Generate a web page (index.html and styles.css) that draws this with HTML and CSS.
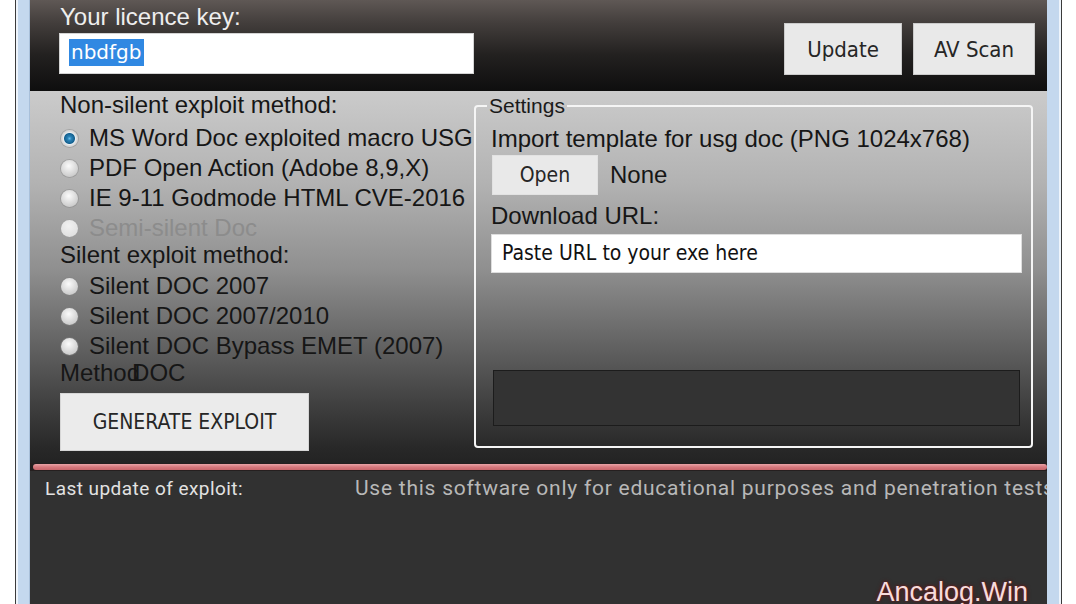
FILE: index.html
```html
<!DOCTYPE html>
<html lang="en">
<head>
<meta charset="utf-8">
<title>Exploit Builder</title>
<link rel="stylesheet" href="styles.css">
</head>
<body>
<div class="window">
  <div class="app">
    <header class="topbar">
      <div class="key">
        <div class="key-label">Your licence key:</div>
        <div class="key-input"><span class="sel">nbdfgb</span></div>
      </div>
      <div class="top-actions">
        <button class="btn btn-top">Update</button>
        <button class="btn btn-top btn-av">AV Scan</button>
      </div>
    </header>

    <main class="main">
      <section class="methods">
        <div class="heading">Non-silent exploit method:</div>
        <ul class="radios">
          <li class="radio checked"><span class="dot"></span>MS Word Doc exploited macro USG</li>
          <li class="radio"><span class="dot"></span>PDF Open Action (Adobe 8,9,X)</li>
          <li class="radio"><span class="dot"></span>IE 9-11 Godmode HTML CVE-2016</li>
          <li class="radio disabled"><span class="dot"></span>Semi-silent Doc</li>
        </ul>
        <div class="heading heading-sm">Silent exploit method:</div>
        <ul class="radios">
          <li class="radio"><span class="dot"></span>Silent DOC 2007</li>
          <li class="radio"><span class="dot"></span>Silent DOC 2007/2010</li>
          <li class="radio"><span class="dot"></span>Silent DOC Bypass EMET (2007)</li>
        </ul>
        <div class="method-doc"><span>Method</span><span class="doc-part">DOC</span></div>
        <button class="btn btn-generate">GENERATE EXPLOIT</button>
      </section>

      <fieldset class="settings">
        <legend>Settings</legend>
        <div class="field-label first">Import template for usg doc (PNG 1024x768)</div>
        <div class="open-row">
          <button class="btn btn-open">Open</button>
          <span class="none">None</span>
        </div>
        <div class="field-label">Download URL:</div>
        <div class="url-input">Paste URL to your exe here</div>
        <div class="output-box"></div>
      </fieldset>
    </main>

    <div class="divider"><div class="redline"></div></div>

    <footer class="status">
      <div class="status-row">
        <span class="last">Last update of exploit:</span>
        <span class="notice">Use this software only for educational purposes and penetration tests</span>
      </div>
      <div class="brand">Ancalog.Win</div>
    </footer>
  </div>
</div>
</body>
</html>
```

FILE: styles.css
```css
html, body {
  margin: 0;
  padding: 0;
  width: 1076px;
  height: 604px;
  overflow: hidden;
  background: #ffffff;
}

.window {
  box-sizing: border-box;
  margin-left: 15px;
  width: 1047px;
  height: 604px;
  padding: 0 14px;
  border-left: 1px solid #3b3b3b;
  border-right: 1px solid #3b3b3b;
  background: #c4d8ee;
  box-shadow: inset 2px 0 0 #eef4fb, inset -2px 0 0 #eef4fb, inset 13px 0 0 #c4d8ee, inset 14px 0 0 #a8bfd9;
}

.app {
  width: 1017px;
  height: 604px;
  overflow: hidden;
  display: flex;
  flex-direction: column;
  font-family: "Liberation Sans", Arial, sans-serif;
  color: #161616;
}

/* ---------- top bar ---------- */
.topbar {
  flex: none;
  box-sizing: border-box;
  height: 91px;
  display: flex;
  justify-content: space-between;
  align-items: flex-start;
  padding: 4px 12px 0 29px;
  background: linear-gradient(to bottom, #5f5855 0%, #433e3c 25%, #232120 60%, #0e0e0e 100%);
}

.key-label {
  font-size: 24px;
  line-height: 26px;
  color: #eeeeee;
  margin-left: 1px;
}

.key-input {
  box-sizing: border-box;
  margin-top: 3px;
  width: 415px;
  height: 41px;
  background: #ffffff;
  border: 1px solid #d4d4d4;
  padding: 5px 0 0 9px;
}

.sel {
  display: inline-block;
  height: 27px;
  line-height: 27px;
  padding: 0 2px;
  background: #3088e2;
  color: #ffffff;
  font-family: "DejaVu Sans", sans-serif;
  font-size: 20px;
}

.top-actions {
  display: flex;
  gap: 11px;
  margin-top: 19px;
}

.btn {
  box-sizing: border-box;
  padding: 0;
  margin: 0;
  border: 1px solid #cbcbcb;
  border-radius: 0;
  background: #e9e9e9;
  color: #262626;
  font-family: "DejaVu Sans Condensed", "DejaVu Sans", sans-serif;
  font-stretch: condensed;
  font-size: 21px;
}

.btn-top {
  width: 118px;
  height: 52px;
  font-size: 22px;
}

.btn-av {
  width: 122px;
}

/* ---------- main ---------- */
.main {
  flex: none;
  height: 372px;
  display: flex;
  align-items: flex-start;
  background: linear-gradient(to bottom, #cbcbcb 0%, #b2b2b2 25%, #8f8f8f 48%, #636363 68%, #3e3e3e 85%, #282828 96%, #232323 100%);
}

.methods {
  flex: none;
  box-sizing: border-box;
  width: 444px;
  padding-left: 30px;
  overflow: hidden;
  white-space: nowrap;
  font-size: 24px;
}

.heading {
  line-height: 28px;
}

.heading-sm {
  line-height: 24px;
}

.radios {
  list-style: none;
  margin: 4px 0 0;
  padding: 0;
}

.radio {
  height: 30px;
  display: flex;
  align-items: center;
  gap: 11px;
  padding-left: 1px;
}

.dot {
  flex: none;
  width: 17px;
  height: 17px;
  border-radius: 50%;
  background: radial-gradient(circle at 45% 35%, #fbfbfb 0%, #dedede 45%, #bcbcbc 100%);
  box-shadow: 0 0 0 1px rgba(130, 130, 130, 0.45);
}

.checked .dot {
  background: radial-gradient(circle at 50% 50%, #6cc0ea 0, #2a83b8 2px, #15618f 5px, #e9eef2 6px, #dcdcdc 7px, #bdbdbd 100%);
}

.disabled {
  color: #8c8c8c;
}

.disabled .dot {
  background: radial-gradient(circle at 45% 35%, #f1f1f1 0%, #dadada 100%);
  box-shadow: 0 0 0 1px rgba(160, 160, 160, 0.3);
}

.method-doc {
  line-height: 24px;
}

.doc-part {
  margin-left: -8px;
}

.btn-generate {
  display: block;
  margin-top: 8px;
  width: 249px;
  height: 58px;
  border-color: #d6d6d6;
  background: #ebebeb;
}

/* ---------- settings ---------- */
.settings {
  box-sizing: border-box;
  flex: none;
  width: 559px;
  margin: 3px 14px 0 0;
  padding: 0 9px 20px 15px;
  border: 2px solid #f5f5f5;
  border-radius: 4px;
  min-inline-size: 0;
}

.settings legend {
  margin-left: -4px;
  padding: 0 2px;
  font-size: 21px;
  line-height: 24px;
  color: #1a1a1a;
}

.field-label {
  font-size: 24px;
  line-height: 28px;
  margin-top: 7px;
  white-space: nowrap;
}

.open-row {
  display: flex;
  align-items: center;
  gap: 12px;
  margin-top: 2px;
  height: 40px;
}

.btn-open {
  width: 106px;
  height: 40px;
  margin-left: 1px;
  border-color: #e2e2e2;
}

.none {
  font-size: 24px;
}

.url-input {
  box-sizing: border-box;
  margin-top: 4px;
  width: 531px;
  height: 39px;
  padding-left: 10px;
  background: #ffffff;
  border: 1px solid #dedede;
  line-height: 37px;
  font-family: "DejaVu Sans Condensed", "DejaVu Sans", sans-serif;
  font-stretch: condensed;
  font-size: 21px;
  color: #111111;
}

.output-box {
  box-sizing: border-box;
  margin: 97px 0 0 2px;
  width: 527px;
  height: 56px;
  background: #333333;
  border: 1px solid #1c1c1c;
}

/* ---------- divider ---------- */
.divider {
  flex: none;
  box-sizing: border-box;
  height: 8px;
  padding: 1px 0 1px 3px;
  background: #251f1f;
}

.redline {
  height: 6px;
  border-radius: 3px;
  background: linear-gradient(to bottom, #eaa3a6 0%, #d6797e 50%, #c8666b 100%);
}

/* ---------- status ---------- */
.status {
  flex: 1;
  background: #313131;
  padding: 5px 19px 0 15px;
}

.status-row {
  display: flex;
  align-items: baseline;
  line-height: 24px;
  white-space: nowrap;
}

.last {
  flex: none;
  width: 310px;
  font-family: Roboto, "Liberation Sans", sans-serif;
  font-size: 19px;
  letter-spacing: 0.45px;
  color: #e2e2e2;
}

.notice {
  font-family: Roboto, "Liberation Sans", sans-serif;
  font-size: 21px;
  letter-spacing: 0.75px;
  color: #b8b8b8;
}

.brand {
  margin-top: 78px;
  text-align: right;
  font-size: 27px;
  line-height: 27px;
  color: #f6dcdc;
  text-shadow: 0 0 2px #7c2222, 0 0 4px #5a1616;
}
```
